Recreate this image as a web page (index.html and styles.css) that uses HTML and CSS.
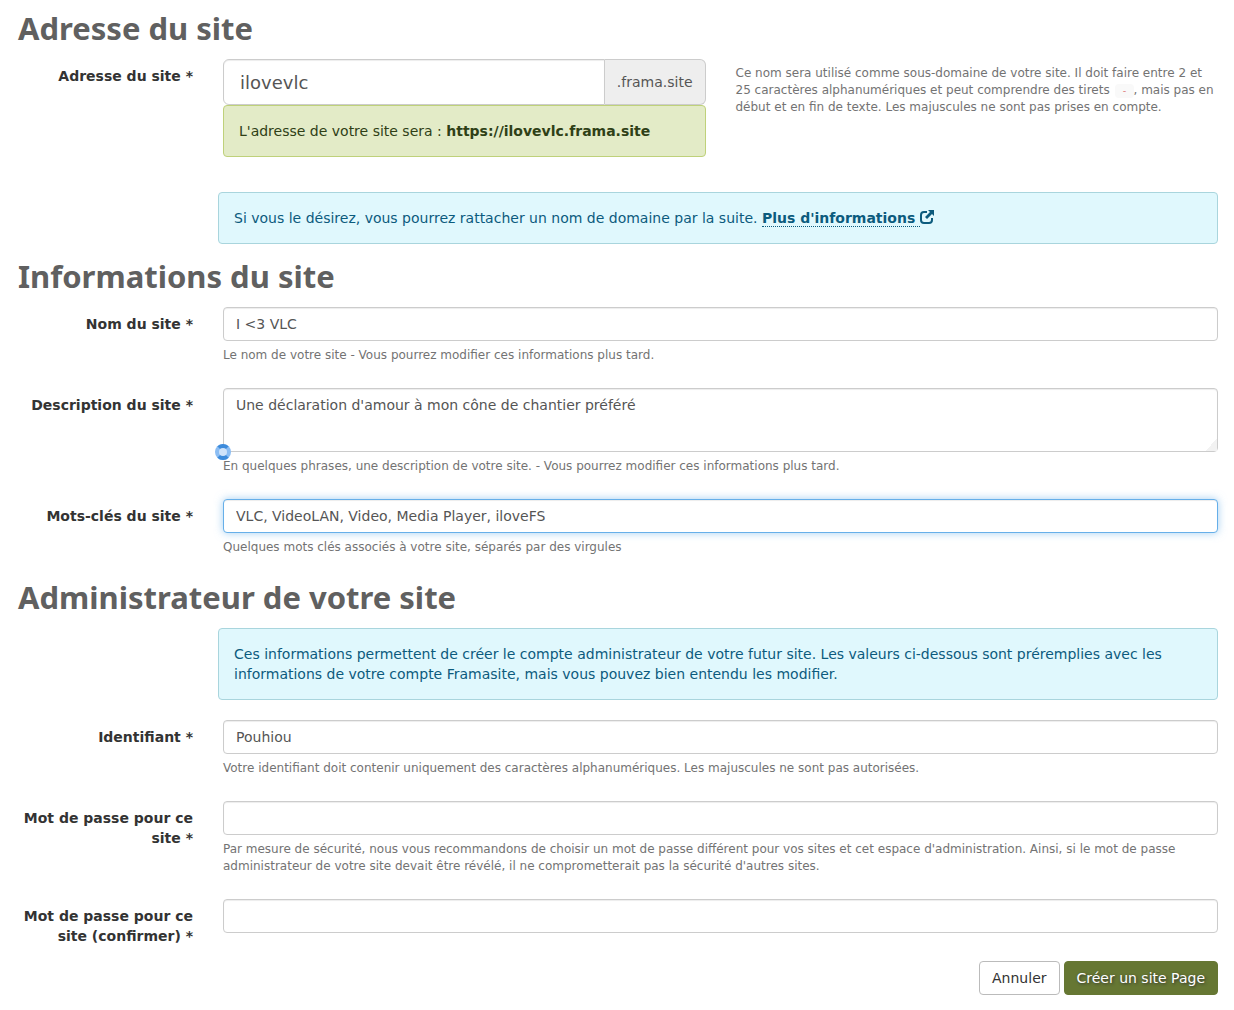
FILE: index.html
```html
<!DOCTYPE html>
<html lang="fr">
<head>
<meta charset="utf-8">
<meta name="viewport" content="width=device-width, initial-scale=1">
<title>Créer un site Page</title>
<link rel="stylesheet" href="styles.css">
</head>
<body>
<form class="site-form">
  <h2>Adresse du site</h2>
  <div class="form-group">
    <label for="subdomain">Adresse du site *</label>
    <div class="field field-half">
      <div class="input-group">
        <input class="control control-lg" id="subdomain" type="text" value="ilovevlc">
        <span class="addon">.frama.site</span>
      </div>
      <div class="alert alert-success">L'adresse de votre site sera : <strong>https://ilovevlc.frama.site</strong></div>
    </div>
    <p class="help help-side">Ce nom sera utilisé comme sous-domaine de votre site. Il doit faire entre 2 et 25 caractères alphanumériques et peut comprendre des tirets <code>-</code>, mais pas en début et en fin de texte. Les majuscules ne sont pas prises en compte.</p>
  </div>
  <div class="alert alert-info">Si vous le désirez, vous pourrez rattacher un nom de domaine par la suite. <a href="#"><span class="link-text">Plus d'informations&nbsp;</span><svg class="icon" viewBox="0 0 14 14" aria-hidden="true"><path d="M7 2H4Q1 2 1 5V10Q1 13 4 13H9Q12 13 12 10V8" fill="none" stroke="currentColor" stroke-width="2"/><path d="M8 0H14V6L12 4L7 9L5 7L10 2Z" fill="currentColor"/></svg></a></div>

  <h2>Informations du site</h2>
  <div class="form-group">
    <label for="name">Nom du site *</label>
    <div class="field">
      <input class="control" id="name" type="text" value="I &lt;3 VLC">
      <p class="help">Le nom de votre site - Vous pourrez modifier ces informations plus tard.</p>
    </div>
  </div>
  <div class="form-group">
    <label for="description">Description du site *</label>
    <div class="field">
      <div class="textarea-wrap">
        <textarea class="control" id="description" rows="2">Une déclaration d'amour à mon cône de chantier préféré</textarea>
        <svg class="marker" viewBox="0 0 16 16" aria-hidden="true"><circle cx="8" cy="8" r="8" fill="#8bbdf3"/><path d="M8 8L2.34 2.34A8 8 0 0 1 13.66 2.34ZM8 8L13.66 13.66A8 8 0 0 1 2.34 13.66Z" fill="#3d8bdb"/><circle cx="8" cy="8" r="4" fill="#cfe3fa"/></svg>
      </div>
      <p class="help">En quelques phrases, une description de votre site. - Vous pourrez modifier ces informations plus tard.</p>
    </div>
  </div>
  <div class="form-group">
    <label for="keywords">Mots-clés du site *</label>
    <div class="field">
      <input class="control control-active" id="keywords" type="text" value="VLC, VideoLAN, Video, Media Player, iloveFS">
      <p class="help">Quelques mots clés associés à votre site, séparés par des virgules</p>
    </div>
  </div>

  <h2>Administrateur de votre site</h2>
  <div class="alert alert-info">Ces informations permettent de créer le compte administrateur de votre futur site. Les valeurs ci-dessous sont préremplies avec les informations de votre compte Framasite, mais vous pouvez bien entendu les modifier.</div>
  <div class="form-group">
    <label for="login">Identifiant *</label>
    <div class="field">
      <input class="control" id="login" type="text" value="Pouhiou">
      <p class="help">Votre identifiant doit contenir uniquement des caractères alphanumériques. Les majuscules ne sont pas autorisées.</p>
    </div>
  </div>
  <div class="form-group">
    <label for="password">Mot de passe pour ce site *</label>
    <div class="field">
      <input class="control" id="password" type="password">
      <p class="help">Par mesure de sécurité, nous vous recommandons de choisir un mot de passe différent pour vos sites et cet espace d'administration. Ainsi, si le mot de passe administrateur de votre site devait être révélé, il ne comprometterait pas la sécurité d'autres sites.</p>
    </div>
  </div>
  <div class="form-group">
    <label for="confirm">Mot de passe pour ce site (confirmer) *</label>
    <div class="field">
      <input class="control" id="confirm" type="password">
    </div>
  </div>
  <div class="actions">
    <button class="btn" type="button">Annuler</button>
    <button class="btn btn-primary" type="submit">Créer un site Page</button>
  </div>
</form>
</body>
</html>
```
FILE: styles.css
```css
* { box-sizing: border-box; }

body {
  margin: 0;
  background: #fff;
  color: #333;
  font: 14px/20px "DejaVu Sans", sans-serif;
}

.site-form { padding: 16px 16px 15px 18px; }

h2 {
  margin: 20px 0 18px;
  color: #606060;
  font: 700 31px/25px "Noto Sans", sans-serif;
}

h2:first-child { margin-top: 0; }

.form-group {
  display: grid;
  grid-template-columns: repeat(12, minmax(0, 1fr));
  column-gap: 30px;
  margin-bottom: 15px;
}

label {
  grid-column: span 2;
  padding-top: 7px;
  text-align: right;
  font-weight: 700;
}

.field { grid-column: span 10; }
.field-half { grid-column: span 5; }

.control {
  display: block;
  width: 100%;
  height: 34px;
  margin: 0;
  padding: 6px 12px;
  border: 1px solid #ccc;
  border-radius: 4px;
  background: #fff;
  box-shadow: inset 0 1px 1px rgba(0, 0, 0, .075);
  color: #555;
  font: inherit;
  outline: none;
}

textarea.control { height: 64px; resize: vertical; }

textarea.control::-webkit-resizer {
  background: linear-gradient(135deg, transparent 60%, #f2f2f2 60%);
}

.control-active {
  border-color: #66afe9;
  box-shadow: inset 0 1px 1px rgba(0, 0, 0, .075), 0 0 8px rgba(102, 175, 233, .6);
}

.input-group { display: flex; }

.control-lg {
  flex: 1;
  min-width: 0;
  height: 46px;
  padding: 10px 16px;
  border-radius: 6px 0 0 6px;
  font-size: 18px;
}

.addon {
  display: flex;
  align-items: center;
  padding: 0 12px;
  border: 1px solid #ccc;
  border-left: 0;
  border-radius: 0 6px 6px 0;
  background: #eee;
  color: #555;
}

.help {
  margin: 6px 0 9px;
  color: #737373;
  font-size: 12px;
  line-height: 17px;
}

.help-side { grid-column: span 5; }

code {
  display: inline-block;
  margin-left: 2px;
  padding: 0 6px;
  border-radius: 4px;
  background: #f9f9f9;
  color: #e08a87;
  font: 10px/14px "DejaVu Sans Mono", monospace;
}

.alert {
  margin-bottom: 20px;
  padding: 15px;
  border: 1px solid;
  border-radius: 4px;
}

.alert-success {
  border-color: #bfd17a;
  background: #e3ebc7;
  color: #2f4016;
}

.alert-info {
  width: calc(100% * 10 / 12);
  margin-left: auto;
  border-color: #a9d5dd;
  background: #e0f8fd;
  color: #0c5b7d;
}

.alert a {
  color: inherit;
  font-weight: 700;
  text-decoration: none;
}

.link-text { border-bottom: 1px dotted; }

.icon { width: 14px; height: 14px; vertical-align: -1px; }

.textarea-wrap { position: relative; }

.marker {
  position: absolute;
  bottom: -8px;
  left: -8px;
  width: 16px;
  height: 16px;
}

.actions {
  display: flex;
  justify-content: flex-end;
  gap: 4px;
}

.btn {
  height: 34px;
  padding: 0 12px;
  border: 1px solid #bbb;
  border-radius: 4px;
  background: #fff;
  color: #333;
  font: inherit;
}

.btn-primary {
  border-color: #667733;
  background: #667733;
  color: #fff;
  text-shadow: 1px 1px 3px #333;
}
```
